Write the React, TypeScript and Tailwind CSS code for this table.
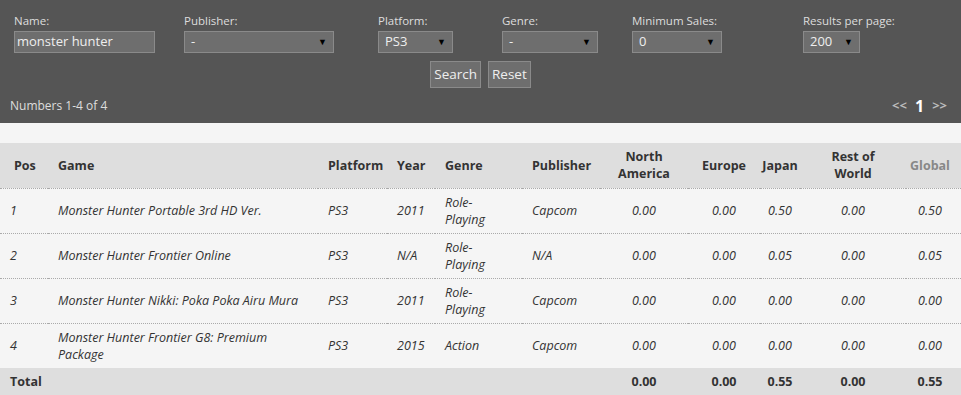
const FONT = "font-['Open_Sans','Noto_Sans',sans-serif]"

const FIELDS = [
  { label: 'Name:', value: 'monster hunter', w: 'w-[170px]', box: 'w-[141px]', input: true },
  { label: 'Publisher:', value: '-', w: 'w-[194px]', box: 'w-[150px]' },
  { label: 'Platform:', value: 'PS3', w: 'w-[124px]', box: 'w-[75px]' },
  { label: 'Genre:', value: '-', w: 'w-[130px]', box: 'w-[96px]' },
  { label: 'Minimum Sales:', value: '0', w: 'w-[171px]', box: 'w-[90px]' },
  { label: 'Results per page:', value: '200', w: 'w-[120px]', box: 'w-[57px]' },
]

const ROWS = [
  { pos: 1, game: 'Monster Hunter Portable 3rd HD Ver.', year: '2011', genre: 'Role-Playing', pub: 'Capcom', na: '0.00', eu: '0.00', jp: '0.50', row: '0.00', gl: '0.50' },
  { pos: 2, game: 'Monster Hunter Frontier Online', year: 'N/A', genre: 'Role-Playing', pub: 'N/A', na: '0.00', eu: '0.00', jp: '0.05', row: '0.00', gl: '0.05' },
  { pos: 3, game: 'Monster Hunter Nikki: Poka Poka Airu Mura', year: '2011', genre: 'Role-Playing', pub: 'Capcom', na: '0.00', eu: '0.00', jp: '0.00', row: '0.00', gl: '0.00' },
  { pos: 4, game: 'Monster Hunter Frontier G8: Premium Package', year: '2015', genre: 'Action', pub: 'Capcom', na: '0.00', eu: '0.00', jp: '0.00', row: '0.00', gl: '0.00' },
]

function Field({ f }: { f: (typeof FIELDS)[number] }) {
  return (
    <div className={`${f.w} shrink-0`}>
      <div className="text-[11.5px] leading-[16px] text-[#dddddd] mb-[2px]">{f.label}</div>
      <div
        className={`${f.box} h-[22px] bg-[#6e6e6e] border border-[#8a8a8a] flex items-center justify-between px-[6px] text-[13px] text-[#eeeeee]`}
      >
        <span className={f.input ? '-ml-[4px]' : ''}>{f.value}</span>
        {!f.input && <span className="text-[9px] text-black">▼</span>}
      </div>
    </div>
  )
}

export default function App() {
  return (
    <div className={`${FONT} w-[961px] h-[395px] bg-[#f5f5f5] overflow-hidden`}>
      {/* filter bar */}
      <div className="bg-[#555555] h-[123px] pt-[13px] px-[14px]">
        <div className="flex">
          {FIELDS.map((f) => (
            <Field key={f.label} f={f} />
          ))}
        </div>
        <div className="flex justify-center gap-[7px] mt-[8px]">
          <button className="h-[27px] px-[3px] bg-[#6e6e6e] border border-[#8a8a8a] text-[13.5px] text-[#eeeeee]">Search</button>
          <button className="h-[27px] px-[3px] bg-[#6e6e6e] border border-[#8a8a8a] text-[13.5px] text-[#eeeeee]">Reset</button>
        </div>
        <div className="flex justify-between items-center -ml-[4px] mt-[6px]">
          <span className="text-[12px] text-[#dddddd]">Numbers 1-4 of 4</span>
          <span className="flex items-center gap-[8px] text-[13px] text-[#bbbbbb] font-bold">
            <span>&lt;&lt;</span>
            <span className="text-[16px] text-white">1</span>
            <span>&gt;&gt;</span>
          </span>
        </div>
      </div>

      {/* table */}
      <table className="mt-[20px] w-[961px] table-fixed border-collapse text-[12.5px] leading-[17px] text-[#333333]">
        <colgroup>
          <col className="w-[48px]" />
          <col className="w-[270px]" />
          <col className="w-[69px]" />
          <col className="w-[48px]" />
          <col className="w-[87px]" />
          <col className="w-[78px]" />
          <col className="w-[88px]" />
          <col className="w-[72px]" />
          <col className="w-[40px]" />
          <col className="w-[106px]" />
          <col className="w-[55px]" />
        </colgroup>
        <thead>
          <tr className="bg-[#dedede] h-[45px] border-b border-dotted border-[#aaaaaa]">
            <th className="text-left font-bold pl-[14px]">Pos</th>
            <th className="text-left font-bold pl-[10px]">Game</th>
            <th className="text-left font-bold pl-[10px]">Platform</th>
            <th className="text-left font-bold pl-[10px]">Year</th>
            <th className="text-left font-bold pl-[10px]">Genre</th>
            <th className="text-left font-bold pl-[10px]">Publisher</th>
            <th className="text-center font-bold">North<br />America</th>
            <th className="text-center font-bold">Europe</th>
            <th className="text-center font-bold">Japan</th>
            <th className="text-center font-bold">Rest of<br />World</th>
            <th className="text-center font-bold text-[#888888] pr-[7px]">Global</th>
          </tr>
        </thead>
        <tbody className="italic">
          {ROWS.map((r, i) => (
            <tr
              key={r.pos}
              className={i < ROWS.length - 1 ? 'h-[45px] border-b border-dotted border-[#aaaaaa]' : 'h-[45px]'}
            >
              <td className="pl-[10px]">{r.pos}</td>
              <td className="pl-[10px] pr-[8px]">{r.game}</td>
              <td className="pl-[10px]">PS3</td>
              <td className="pl-[10px]">{r.year}</td>
              <td className="pl-[10px] pr-[30px]">{r.genre}</td>
              <td className="pl-[10px]">{r.pub}</td>
              <td className="text-center">{r.na}</td>
              <td className="text-center">{r.eu}</td>
              <td className="text-center">{r.jp}</td>
              <td className="text-center">{r.row}</td>
              <td className="text-center pr-[7px]">{r.gl}</td>
            </tr>
          ))}
          <tr className="h-[27px] bg-[#dedede] font-bold not-italic">
            <td className="pl-[10px]" colSpan={6}>Total</td>
            <td className="text-center">0.00</td>
            <td className="text-center">0.00</td>
            <td className="text-center">0.55</td>
            <td className="text-center">0.00</td>
            <td className="text-center pr-[7px]">0.55</td>
          </tr>
        </tbody>
      </table>
    </div>
  )
}
